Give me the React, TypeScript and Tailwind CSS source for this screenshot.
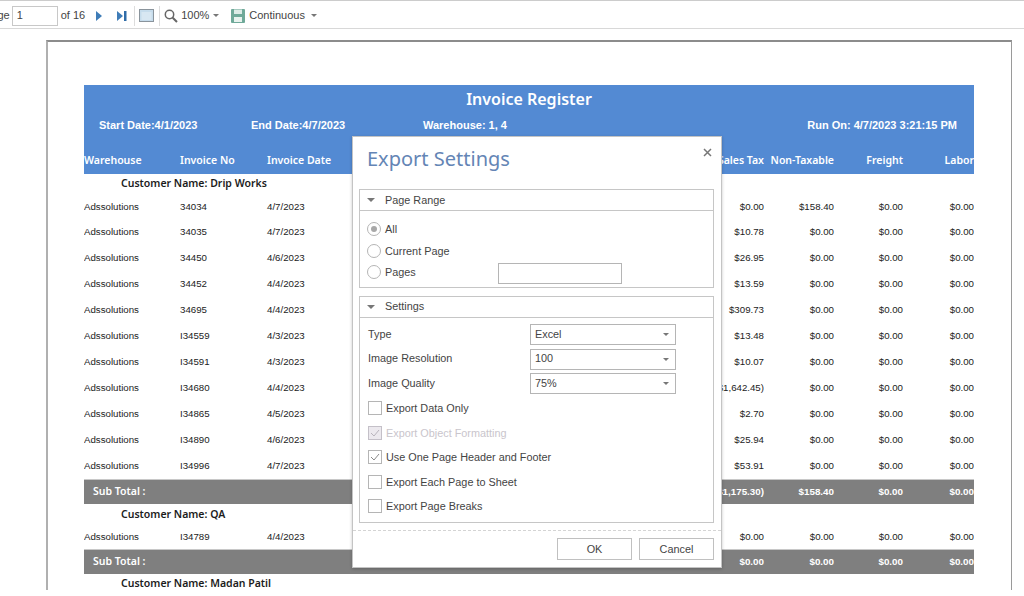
const GRID = "grid grid-cols-[96px_87px_427px_70px_70px_69px_71px] items-center";
const HEAD = "font-['Noto_Sans',sans-serif] font-semibold";

type Row = { inv: string; date: string; tax: string; nt?: string; cls?: string };
const rows: Row[] = [
  { inv: "34034", date: "4/7/2023", tax: "$0.00", nt: "$158.40", cls: "h-[25px] pt-[3px]" },
  { inv: "34035", date: "4/7/2023", tax: "$10.78" },
  { inv: "34450", date: "4/6/2023", tax: "$26.95" },
  { inv: "34452", date: "4/4/2023", tax: "$13.59" },
  { inv: "34695", date: "4/4/2023", tax: "$309.73" },
  { inv: "I34559", date: "4/3/2023", tax: "$13.48" },
  { inv: "I34591", date: "4/3/2023", tax: "$10.07" },
  { inv: "I34680", date: "4/4/2023", tax: "($1,642.45)" },
  { inv: "I34865", date: "4/5/2023", tax: "$2.70" },
  { inv: "I34890", date: "4/6/2023", tax: "$25.94" },
  { inv: "I34996", date: "4/7/2023", tax: "$53.91" },
];

function DataRow({ r }: { r: Row }) {
  return (
    <div className={`${GRID} text-[9.7px] text-[#222] ${r.cls ?? "h-[26px] pt-[2px]"}`}>
      <div>Adssolutions</div>
      <div>{r.inv}</div>
      <div>{r.date}</div>
      <div className="text-right whitespace-nowrap">{r.tax}</div>
      <div className="text-right">{r.nt ?? "$0.00"}</div>
      <div className="text-right">$0.00</div>
      <div className="text-right">$0.00</div>
    </div>
  );
}

function SubTotal({ tax, nt }: { tax: string; nt: string }) {
  return (
    <div className="mt-px border-t border-[#c8c8c8] bg-[#7f7f7f] text-white">
      <div className={`${GRID} h-[24px] text-[9.8px] font-bold`}>
        <div className={`${HEAD} text-[10.5px] pl-[9px] col-span-3`}>Sub Total :</div>
        <div className="text-right whitespace-nowrap">{tax}</div>
        <div className="text-right">{nt}</div>
        <div className="text-right">$0.00</div>
        <div className="text-right">$0.00</div>
      </div>
    </div>
  );
}

function Customer({ name, cls }: { name: string; cls: string }) {
  return (
    <div className={`${HEAD} ${cls} flex items-center pl-[37px] text-[10.5px] text-[#1c1c1c]`}>
      Customer Name: {name}
    </div>
  );
}

function Caret({ cls }: { cls: string }) {
  return (
    <svg width="6" height="3" viewBox="0 0 6 3" className={cls}>
      <path d="M0 0h6L3 3z" fill="#777" />
    </svg>
  );
}

function Radio({ on, label, mt }: { on?: boolean; label: string; mt?: string }) {
  return (
    <div className={`flex items-center h-[14px] ${mt ?? ""}`}>
      <span className="w-[14px] h-[14px] rounded-full border border-[#b5b5b5] bg-white flex items-center justify-center">
        {on && <span className="w-[6px] h-[6px] rounded-full bg-[#a8a8a8]" />}
      </span>
      <span className="ml-[4px]">{label}</span>
    </div>
  );
}

function Check({ on, off, label }: { on?: boolean; off?: boolean; label: string }) {
  return (
    <div className="flex items-center h-[24.5px]">
      <span
        className={`w-[14px] h-[14px] border flex items-center justify-center ${
          off ? "border-[#c4c0c8] bg-[#ece9ee]" : "border-[#b5b5b5] bg-white"
        }`}
      >
        {(on || off) && (
          <svg width="10" height="8" viewBox="0 0 10 8">
            <path d="M1 4l3 3 5-6" fill="none" stroke={off ? "#b8b4bc" : "#8a8a8a"} strokeWidth="1" />
          </svg>
        )}
      </span>
      <span className={`ml-[4px] ${off ? "text-[#c9c5cc]" : ""}`}>{label}</span>
    </div>
  );
}

function SelectRow({ label, value }: { label: string; value: string }) {
  return (
    <div className="flex items-center h-[21px]">
      <span className="w-[162px] pb-[1px]">{label}</span>
      <div className="w-[146px] h-[21px] border border-[#b5b5b5] flex items-center justify-between pl-[4px] pr-[6px]">
        <span className="pb-[1px]">{value}</span>
        <Caret cls="" />
      </div>
    </div>
  );
}

function Section({ title, cls, labelCls, children }: { title: string; cls: string; labelCls?: string; children: React.ReactNode }) {
  return (
    <div className={`ml-[6px] mr-[7px] border border-[#c6c6c6] ${cls}`}>
      <div className="h-[21px] border-b border-[#c6c6c6] flex items-center pl-[7px]">
        <svg width="8" height="4" viewBox="0 0 8 4">
          <path d="M0 0h8L4 4z" fill="#777" />
        </svg>
        <span className={`ml-[10px] ${labelCls ?? ""}`}>{title}</span>
      </div>
      {children}
    </div>
  );
}

function Dialog() {
  return (
    <div className="absolute left-[352px] top-[136px] w-[370px] h-[432px] bg-white border border-[#c4c4c4] shadow-[0_1px_3px_rgba(0,0,0,0.22)] text-[10.85px] text-[#444] font-['Liberation_Sans',sans-serif]">
      <div className="h-[52px] relative">
        <div className="pl-[14px] pt-[7px] font-['Noto_Sans',sans-serif] text-[20px] leading-[30px] text-[#6485b5]">
          Export Settings
        </div>
        <svg width="9" height="9" viewBox="0 0 9 9" className="absolute top-[11px] right-[9px]">
          <path d="M1 1l7 7M8 1l-7 7" stroke="#777" strokeWidth="1.5" />
        </svg>
      </div>
      <Section title="Page Range" cls="h-[99px]">
        <div className="pl-[7px] pt-[11px] relative">
          <Radio on label="All" />
          <Radio label="Current Page" mt="mt-[8px]" />
          <Radio label="Pages" mt="mt-[7px]" />
          <div className="absolute left-[138px] top-[52px] w-[124px] h-[21px] border border-[#b5b5b5]" />
        </div>
      </Section>
      <Section title="Settings" cls="h-[227px] mt-[8px]" labelCls="pb-[1px]">
        <div className="pl-[8px] pt-[6px] flex flex-col gap-[3.5px]">
          <SelectRow label="Type" value="Excel" />
          <SelectRow label="Image Resolution" value="100" />
          <SelectRow label="Image Quality" value="75%" />
        </div>
        <div className="pl-[8px] pt-[2px]">
          <Check label="Export Data Only" />
          <Check off label="Export Object Formatting" />
          <Check on label="Use One Page Header and Footer" />
          <Check label="Export Each Page to Sheet" />
          <Check label="Export Page Breaks" />
        </div>
      </Section>
      <div className="mt-[7px] border-t border-dashed border-[#d4d4d4] pt-[7px] pr-[7px] flex justify-end gap-[7px]">
        <button className="w-[75px] h-[22px] border border-[#c0c0c0] bg-white text-[#444]">OK</button>
        <button className="w-[75px] h-[22px] border border-[#c0c0c0] bg-white text-[#444]">Cancel</button>
      </div>
    </div>
  );
}

function Toolbar() {
  return (
    <div className="h-[29px] pt-[2px] border-t border-b border-t-[#ccc] border-b-[#d8d8d8] flex items-center -ml-[16px] text-[11px] text-[#444] overflow-hidden">
      <span className="mr-[2px]">Page</span>
      <div className="w-[46px] h-[20px] border border-[#c8c8c8] pl-[4px] flex items-center text-[11px]">1</div>
      <span className="ml-[3px]">of 16</span>
      <svg width="8" height="10" viewBox="0 0 8 10" className="ml-[10px]">
        <path d="M1 0l6 5-6 5z" fill="#3f7db8" />
      </svg>
      <svg width="10" height="10" viewBox="0 0 10 10" className="ml-[14px]">
        <path d="M0 0l6 5-6 5z" fill="#3f7db8" />
        <rect x="7" width="2.5" height="10" fill="#2f6ca8" />
      </svg>
      <span className="ml-[7px] w-px h-[20px] bg-[#ddd]" />
      <svg width="15" height="13" viewBox="0 0 15 13" className="ml-[4px]">
        <rect x="0.5" y="0.5" width="14" height="12" fill="#c6dcec" stroke="#8a949c" />
        <rect x="2.5" y="3" width="10" height="8" fill="#d8e7f2" />
      </svg>
      <span className="ml-[5px] w-px h-[20px] bg-[#ddd]" />
      <svg width="14" height="14" viewBox="0 0 14 14" className="ml-[4px]">
        <circle cx="5.5" cy="5.5" r="4.2" fill="none" stroke="#666" strokeWidth="1.5" />
        <path d="M8.7 8.7L13 13" stroke="#666" strokeWidth="2" />
      </svg>
      <span className="ml-[3px]">100%</span>
      <Caret cls="ml-[4px]" />
      <svg width="14" height="14" viewBox="0 0 14 14" className="ml-[12px]">
        <rect width="14" height="14" rx="1" fill="#6fa999" />
        <rect x="3" y="0.5" width="8" height="4.5" fill="#dcebe6" />
        <rect x="3" y="8" width="8" height="5" fill="#e8f2ee" />
      </svg>
      <span className="ml-[4px]">Continuous</span>
      <Caret cls="ml-[6px]" />
    </div>
  );
}

export default function App() {
  return (
    <div className="relative w-[1024px] h-[596px] overflow-hidden bg-white font-['Liberation_Sans',sans-serif]">
      <Toolbar />
      <div className="pt-[11px] pl-[46px]">
        <div className="w-[966px] h-[550px] border-t-2 border-l-2 border-r border-t-[#8c8c8c] border-l-[#b0b0b0] border-r-[#9a9a9a] pt-[43px] pl-[36px] overflow-hidden">
          <div className="w-[890px] h-[89px] bg-[#538ad3] text-white overflow-hidden flex flex-col">
            <div className={`${HEAD} font-bold text-[16px] leading-[28px] text-center`}>Invoice Register</div>
            <div className="flex items-center h-[24px] pl-[15px] pr-[17px] text-[11px] font-bold">
              <span className="w-[152px]">Start Date:4/1/2023</span>
              <span className="w-[172px]">End Date:4/7/2023</span>
              <span>Warehouse: 1, 4</span>
              <span className="ml-auto">Run On: 4/7/2023 3:21:15 PM</span>
            </div>
            <div className={`${GRID} ${HEAD} text-[10.5px] h-[24px] mt-[12px]`}>
              <div>Warehouse</div>
              <div>Invoice No</div>
              <div>Invoice Date</div>
              <div className="text-right whitespace-nowrap">Sales Tax</div>
              <div className="text-right whitespace-nowrap">Non-Taxable</div>
              <div className="text-right">Freight</div>
              <div className="text-right">Labor</div>
            </div>
          </div>
          <div className="w-[890px] overflow-hidden">
            <Customer name="Drip Works" cls="h-[19px]" />
            {rows.map((r) => (
              <DataRow key={r.inv} r={r} />
            ))}
            <SubTotal tax="($1,175.30)" nt="$158.40" />
            <Customer name="QA" cls="h-[20px] pt-[2px]" />
            <DataRow r={{ inv: "I34789", date: "4/4/2023", tax: "$0.00", nt: "$0.00", cls: "h-[24px] pt-[2px]" }} />
            <SubTotal tax="$0.00" nt="$0.00" />
            <Customer name="Madan Patil" cls="h-[18px] pt-[2px]" />
          </div>
        </div>
      </div>
      <Dialog />
    </div>
  );
}
